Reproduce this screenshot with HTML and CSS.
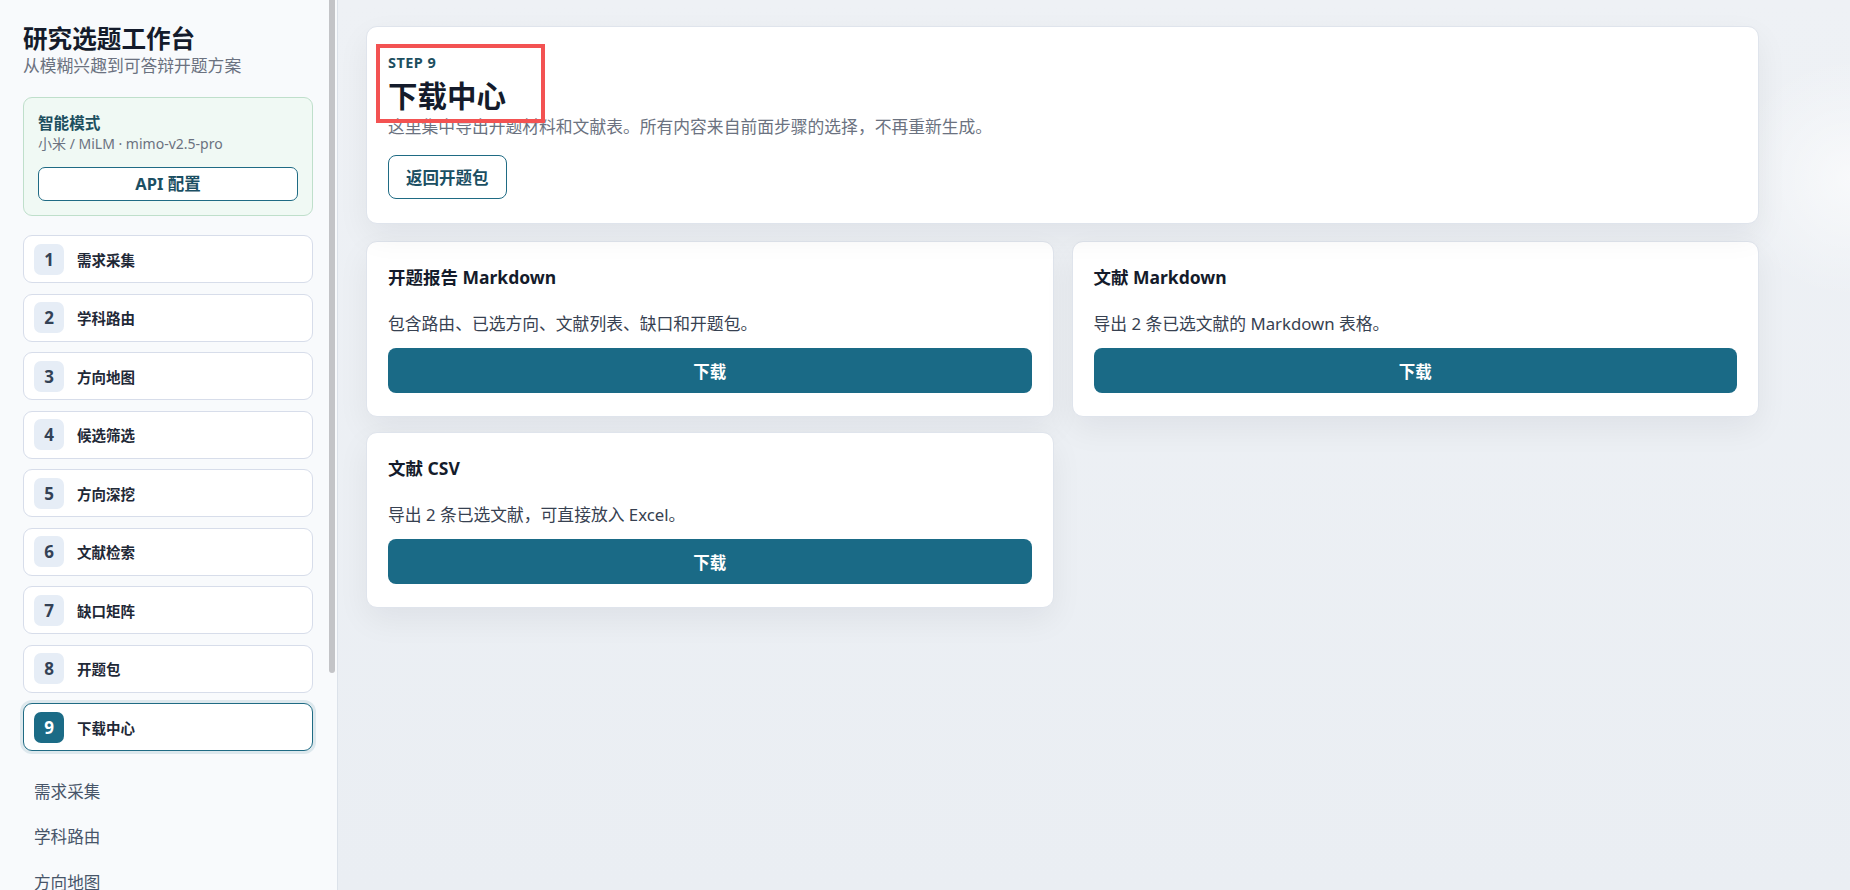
FILE: index.html
```html
<!DOCTYPE html>
<html lang="zh-CN">
<head>
<meta charset="utf-8">
<title>研究选题工作台 · 下载中心</title>
<link rel="stylesheet" href="styles.css">
</head>
<body>
<div class="app">
  <aside class="sidebar">
    <div class="sidebar-scroll">
      <div class="brand">
        <h2 class="brand-title">研究选题工作台</h2>
        <p class="brand-sub">从模糊兴趣到可答辩开题方案</p>
      </div>

      <div class="mode-box">
        <div class="mode-title">智能模式</div>
        <div class="mode-meta">小米 / MiLM · mimo-v2.5-pro</div>
        <button class="mode-btn" type="button">API 配置</button>
      </div>

      <ol class="steps">
        <li class="step"><span class="step-num">1</span><span class="step-label">需求采集</span></li>
        <li class="step"><span class="step-num">2</span><span class="step-label">学科路由</span></li>
        <li class="step"><span class="step-num">3</span><span class="step-label">方向地图</span></li>
        <li class="step"><span class="step-num">4</span><span class="step-label">候选筛选</span></li>
        <li class="step"><span class="step-num">5</span><span class="step-label">方向深挖</span></li>
        <li class="step"><span class="step-num">6</span><span class="step-label">文献检索</span></li>
        <li class="step"><span class="step-num">7</span><span class="step-label">缺口矩阵</span></li>
        <li class="step"><span class="step-num">8</span><span class="step-label">开题包</span></li>
        <li class="step is-active"><span class="step-num">9</span><span class="step-label">下载中心</span></li>
      </ol>

      <nav class="quick-links">
        <a class="quick-link" href="#">需求采集</a>
        <a class="quick-link" href="#">学科路由</a>
        <a class="quick-link" href="#">方向地图</a>
        <a class="quick-link" href="#">候选筛选</a>
        <a class="quick-link" href="#">方向深挖</a>
        <a class="quick-link" href="#">文献检索</a>
        <a class="quick-link" href="#">缺口矩阵</a>
        <a class="quick-link" href="#">开题包</a>
        <a class="quick-link" href="#">下载中心</a>
      </nav>
    </div>
    <div class="scroll-thumb"></div>
  </aside>

  <main class="main">
    <div class="content">
      <section class="card page-head">
        <div class="title-highlight"></div>
        <div class="eyebrow">STEP 9</div>
        <h1 class="page-title">下载中心</h1>
        <p class="page-desc">这里集中导出开题材料和文献表。所有内容来自前面步骤的选择，不再重新生成。</p>
        <button class="btn-outline" type="button">返回开题包</button>
      </section>

      <section class="download-grid">
        <article class="card dl-card">
          <h3 class="dl-title">开题报告 Markdown</h3>
          <p class="dl-desc">包含路由、已选方向、文献列表、缺口和开题包。</p>
          <button class="btn-primary" type="button">下载</button>
        </article>
        <article class="card dl-card">
          <h3 class="dl-title">文献 Markdown</h3>
          <p class="dl-desc">导出 2 条已选文献的 Markdown 表格。</p>
          <button class="btn-primary" type="button">下载</button>
        </article>
        <article class="card dl-card">
          <h3 class="dl-title">文献 CSV</h3>
          <p class="dl-desc">导出 2 条已选文献，可直接放入 Excel。</p>
          <button class="btn-primary" type="button">下载</button>
        </article>
      </section>
    </div>
  </main>
</div>
</body>
</html>
```

FILE: styles.css
```css
* {
  box-sizing: border-box;
}

html,
body {
  margin: 0;
  height: 100%;
}

body {
  font-family: "Noto Sans", "Noto Sans CJK SC", sans-serif;
  color: #1f2937;
  background: #edf0f4;
  overflow: hidden;
}

button {
  font-family: inherit;
  cursor: pointer;
}

.app {
  display: flex;
  height: 100vh;
}

/* ---------- sidebar ---------- */

.sidebar {
  position: relative;
  width: 338px;
  flex: 0 0 338px;
  height: 100vh;
  background: #f8fafc;
  border-right: 1px solid #dce2ea;
}

.sidebar-scroll {
  height: 100%;
  overflow: hidden;
  padding: 24px 15px 0 23px;
}

/* scrollbar thumb of the sidebar's scroll area */
.scroll-thumb {
  position: absolute;
  top: 0;
  right: 2px;
  width: 6px;
  height: 673px;
  background: #c3c4c7;
  border-radius: 0 0 3px 3px;
}

.brand-title {
  margin: 0;
  font-size: 24.6px;
  line-height: 30px;
  font-weight: 700;
  color: #141b2b;
}

.brand-sub {
  margin: 0;
  font-size: 16.8px;
  line-height: 24px;
  color: #6b7280;
}

.mode-box {
  margin-top: 19px;
  width: 290px;
  background: #f0f9f4;
  border: 1px solid #bfdfcb;
  border-radius: 9px;
  padding: 14px 14px 14px;
}

.mode-title {
  font-size: 15.6px;
  line-height: 22px;
  font-weight: 700;
  color: #1d4f5f;
}

.mode-meta {
  font-size: 14px;
  line-height: 20px;
  color: #6b7280;
}

.mode-btn {
  display: block;
  width: 100%;
  height: 34px;
  margin-top: 13px;
  background: #ffffff;
  border: 1px solid #1f6b84;
  border-radius: 7px;
  font-size: 16.5px;
  font-weight: 700;
  color: #1b4f63;
  line-height: 1;
}

.steps {
  list-style: none;
  margin: 19px 0 0;
  padding: 0;
  width: 290px;
  display: flex;
  flex-direction: column;
  gap: 10.5px;
}

.step {
  height: 48px;
  display: flex;
  align-items: center;
  gap: 13px;
  padding: 0 10px;
  background: #ffffff;
  border: 1px solid #d7ddea;
  border-radius: 9px;
}

.step-num {
  width: 30px;
  height: 31px;
  flex: 0 0 30px;
  display: flex;
  align-items: center;
  justify-content: center;
  border-radius: 7px;
  background: #e6edf6;
  color: #334155;
  font-size: 17px;
  font-weight: 700;
}

.step-label {
  font-size: 14.5px;
  font-weight: 700;
  color: #1f2937;
}

.step.is-active {
  border-color: #1f6b84;
  box-shadow: 0 0 0 3px rgba(31, 107, 132, 0.12);
}

.step.is-active .step-num {
  background: #1b6b86;
  color: #ffffff;
}

.quick-links {
  display: flex;
  flex-direction: column;
  padding-top: 17px;
}

.quick-link {
  display: flex;
  align-items: center;
  height: 45.5px;
  padding: 0 11px;
  font-size: 16.6px;
  color: #475569;
  text-decoration: none;
}

/* ---------- main ---------- */

.main {
  flex: 1;
  min-width: 0;
  height: 100vh;
  overflow: hidden;
  padding: 26px 0 0 28px;
  background:
    radial-gradient(circle at 100% 20%, rgba(255, 255, 255, 0.6), rgba(255, 255, 255, 0) 120px),
    linear-gradient(180deg, #eef1f5 0%, #eaeef3 100%);
}

.content {
  width: 1393px;
}

.card {
  background: #ffffff;
  border: 1px solid #dfe4ec;
  border-radius: 11px;
  box-shadow: 0 12px 32px rgba(15, 23, 42, 0.06);
}

.page-head {
  position: relative;
  padding: 22px 21px 24px;
}

/* red outline drawn over the step heading */
.title-highlight {
  position: absolute;
  left: 9px;
  top: 17px;
  width: 169px;
  height: 79px;
  border: 4px solid #f35252;
  pointer-events: none;
}

.eyebrow {
  font-size: 14.5px;
  line-height: 26px;
  font-weight: 700;
  letter-spacing: 0.03em;
  color: #1d4f5f;
}

.page-title {
  margin: 3px 0 0;
  font-size: 29.5px;
  line-height: 36px;
  font-weight: 700;
  color: #141b2b;
}

.page-desc {
  margin: 0;
  font-size: 16.8px;
  line-height: 26px;
  color: #6b7280;
}

.btn-outline {
  margin-top: 15px;
  height: 44px;
  padding: 0 17px;
  background: #ffffff;
  border: 1px solid #1f6b84;
  border-radius: 8px;
  font-size: 16.5px;
  font-weight: 700;
  color: #1b4f63;
}

.download-grid {
  margin-top: 17px;
  display: grid;
  grid-template-columns: 1fr 1fr;
  column-gap: 18px;
  row-gap: 15px;
}

.dl-card {
  display: flex;
  flex-direction: column;
  padding: 22px 21px 23px;
}

.dl-title {
  margin: 0;
  font-size: 17.5px;
  line-height: 26px;
  font-weight: 700;
  color: #141b2b;
}

.dl-desc {
  margin: 21px 0 0;
  font-size: 16.8px;
  line-height: 26px;
  color: #374151;
}

.btn-primary {
  margin-top: 11px;
  height: 45px;
  width: 100%;
  background: #1a6a86;
  border: 0;
  border-radius: 8px;
  color: #ffffff;
  font-size: 16.5px;
  font-weight: 700;
}
```
